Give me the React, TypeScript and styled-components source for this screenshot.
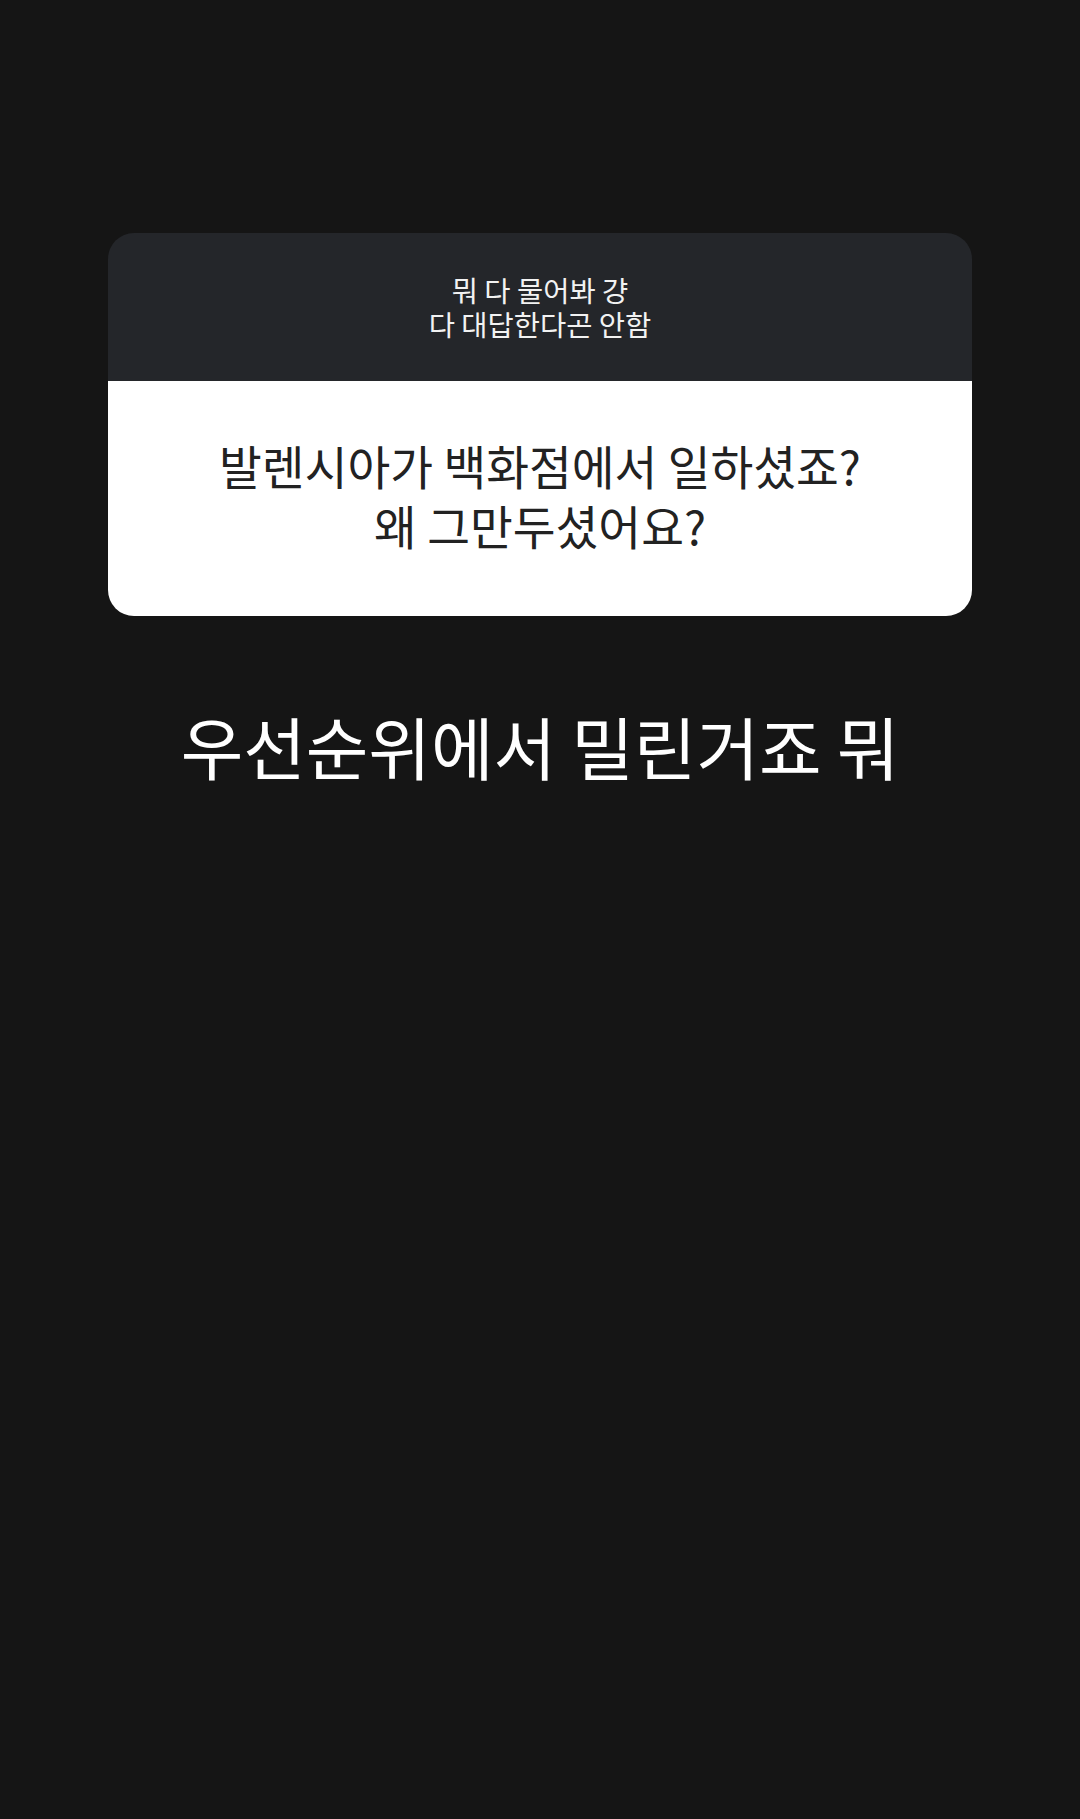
import React from 'react'
import styled, { createGlobalStyle } from 'styled-components'

const GlobalStyle = createGlobalStyle`
  html, body {
    margin: 0;
    padding: 0;
    background: #151515;
  }
  body {
    font-family: "Noto Sans CJK KR", "Noto Sans", sans-serif;
  }
`

const Page = styled.div`
  width: 1080px;
  height: 1819px;
  background: #151515;
  display: flex;
  flex-direction: column;
  align-items: center;
  padding-top: 233px;
  box-sizing: border-box;
`

const Card = styled.div`
  width: 864px;
  border-radius: 26px;
  overflow: hidden;
  display: flex;
  flex-direction: column;
`

const CardHeader = styled.div`
  height: 148px;
  background: #24262a;
  color: #f2f2f2;
  display: flex;
  align-items: center;
  justify-content: center;
  text-align: center;
  font-size: 28.5px;
  line-height: 34px;
  padding-bottom: 1px;
  box-sizing: border-box;
`

const CardBody = styled.div`
  height: 235px;
  background: #ffffff;
  color: #222222;
  display: flex;
  align-items: center;
  justify-content: center;
  text-align: center;
  font-size: 46.5px;
  line-height: 60px;
  font-weight: 400;
  padding-bottom: 8px;
  box-sizing: border-box;
`

const Answer = styled.div`
  margin-top: 90px;
  color: #ffffff;
  font-size: 68px;
  line-height: 80px;
`

export default function App() {
  return (
    <Page>
      <GlobalStyle />
      <Card>
        <CardHeader>
          뭐 다 물어봐 걍
          <br />
          다 대답한다곤 안함
        </CardHeader>
        <CardBody>
          발렌시아가 백화점에서 일하셨죠?
          <br />
          왜 그만두셨어요?
        </CardBody>
      </Card>
      <Answer>우선순위에서 밀린거죠 뭐</Answer>
    </Page>
  )
}
